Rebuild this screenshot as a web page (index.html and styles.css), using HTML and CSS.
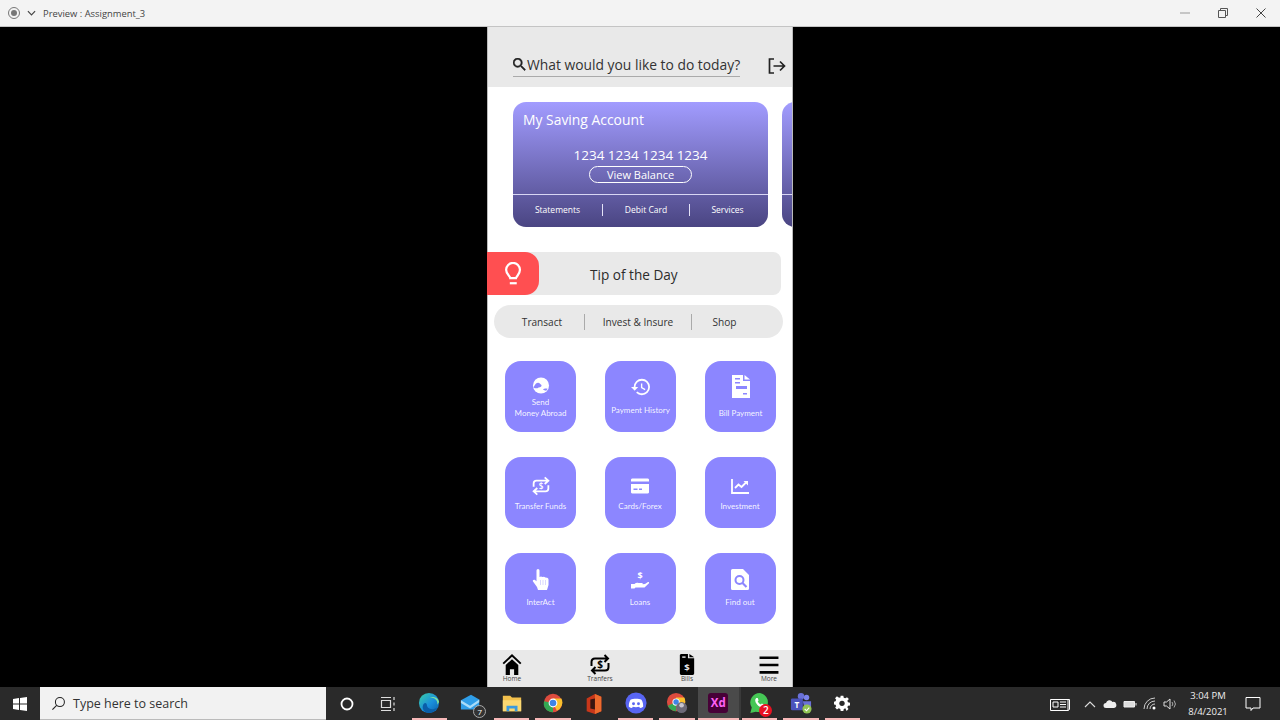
FILE: index.html
```html
<!DOCTYPE html>
<html lang="en">
<head>
  <meta charset="UTF-8">
  <meta name="viewport" content="width=device-width, initial-scale=1.0">
  <title>Preview : Assignment_3</title>
  <link rel="stylesheet" href="styles.css">
</head>
<body>
  <header class="titlebar">
    <svg class="rec" viewBox="0 0 14 14"><circle cx="7" cy="7" r="5.5" fill="none" stroke="#777"/><circle cx="7" cy="7" r="3" fill="#777"/></svg>
    <svg class="chev" viewBox="0 0 10 6"><path d="M1 1l4 4 4-4" fill="none" stroke="#444" stroke-width="1.3"/></svg>
    <span class="title">Preview : Assignment_3</span>
    <div class="winbtns">
      <svg viewBox="0 0 12 12"><path d="M1 6h10" stroke="#999" fill="none"/></svg>
      <svg viewBox="0 0 12 12"><path d="M1.5 3.5h7v7h-7zM3.5 3.5v-2h7v7h-2" stroke="#555" fill="none"/></svg>
      <svg viewBox="0 0 12 12"><path d="M1.5 1.5l9 9M10.5 1.5l-9 9" stroke="#444" fill="none"/></svg>
    </div>
  </header>

  <main class="stage">
    <div class="phone">
      <div class="top">
        <div class="search">
          <svg class="search-ico" viewBox="3 3 18 18"><path d="M15.5 14h-.79l-.28-.27A6.471 6.471 0 0 0 16 9.5 6.5 6.5 0 1 0 9.5 16c1.61 0 3.09-.59 4.23-1.57l.27.28v.79l5 4.99L20.49 19l-4.99-5zm-6 0C7.01 14 5 11.99 5 9.5S7.01 5 9.5 5 14 7.01 14 9.5 11.99 14 9.5 14z" fill="#222" stroke="#222" stroke-width=".6"/></svg>
          <span>What would you like to do today?</span>
        </div>
        <svg class="exit" viewBox="0 0 18 16"><path d="M6 1H1.5v14H6M5.5 8h11M12 3.5L16.5 8 12 12.5" fill="none" stroke="#222" stroke-width="1.7"/></svg>
      </div>

      <div class="cards">
        <section class="card">
          <h3>My Saving Account</h3>
          <div class="number">1234 1234 1234 1234</div>
          <div class="balance-row"><span class="balance">View Balance</span></div>
          <div class="links">
            <span class="l1">Statements</span><span class="l2">Debit Card</span><span class="l3">Services</span>
          </div>
        </section>
        <section class="card">
          <div class="links links-only"></div>
        </section>
      </div>

      <div class="tip">
        <div class="bulb">
          <svg viewBox="0 0 20 26"><path d="M6.5 17.500c0-2.500-4.500-4-4.500-9a7.500 7.500 0 0 1 15 0c0 5-3.800 6.500-4.300 9z" fill="none" stroke="#fff" stroke-width="2.400"/><path d="M6 23h7.500" stroke="#fff" stroke-width="2.400"/></svg>
        </div>
        <span>Tip of the Day</span>
      </div>

      <nav class="tabs">
        <span class="t1">Transact</span><span class="t2">Invest &amp; Insure</span><span class="t3">Shop</span>
      </nav>

      <div class="grid">
        <a class="tile r-send">
          <svg class="ico" viewBox="0 0 18 18"><circle cx="9" cy="9" r="8.500" fill="#fff"/><path d="M1 11c2-3.500 3-5 5-5 1.500 0 2 1.500 3.500 2.500.5 1.500-1 2.500-3 2.500-2 1.500-3.500 1-5.500 0zM11 13c1.500-1 3-1 5-.5l-1.500 2c-1.500 0-2.500-.5-3.500-1.500z" fill="#8c86ff"/></svg>
          <span>Send<br>Money Abroad</span>
        </a>
        <a class="tile r-hist">
          <svg class="ico" viewBox="1 3 21 18"><path d="M13 3a9 9 0 0 0-9 9H1l3.890 3.890.07.14L9 12H6c0-3.870 3.130-7 7-7s7 3.130 7 7-3.130 7-7 7c-1.930 0-3.680-.79-4.940-2.060l-1.420 1.420A8.954 8.954 0 0 0 13 21a9 9 0 0 0 0-18zm-1 5v5l4.280 2.540.72-1.210-3.500-2.080V8H12z" fill="#fff"/></svg>
          <span>Payment History</span>
        </a>
        <a class="tile r-bill">
          <svg class="ico" viewBox="0 0 18 23"><path d="M0 0h11v6h7v17H0z" fill="#fff"/><path d="M12.500 0L18 4.500h-5.500z" fill="#fff"/><path d="M3 3h5v1.500H3zM3 7h5v1.500H3zM4 11h11v3H4zM11 18h4v1.500h-4z" fill="#8c86ff"/></svg>
          <span>Bill Payment</span>
        </a>
        <a class="tile r-mid">
          <svg class="ico" viewBox="0 0 22 24"><path d="M2 13V9c0-2.500 1.500-3.500 3.500-3.500H19M15.500 1.500l4.500 4-4.500 4M20 11v4c0 2.500-1.500 3.500-3.500 3.500H3M6.500 14.500l-4.500 4 4.500 4" fill="none" stroke="#fff" stroke-width="2.200"/><text x="11" y="16" text-anchor="middle" class="dollar">$</text></svg>
          <span>Transfer Funds</span>
        </a>
        <a class="tile r-mid nudge">
          <svg class="ico" viewBox="0 0 18 20"><path d="M0 3.500A1.500 1.500 0 0 1 1.500 2.500h15A1.500 1.500 0 0 1 18 3.500V5.500H0zM0 8h18v8.500a1.500 1.500 0 0 1-1.500 1h-15A1.500 1.500 0 0 1 0 16.500z" fill="#fff"/><path d="M2.500 12.500h4v1.500h-4zM8 12.500h3v1.500H8z" fill="#8c86ff"/></svg>
          <span>Cards/Forex</span>
        </a>
        <a class="tile r-mid nudge">
          <svg class="ico" viewBox="0 0 18 20"><path d="M1 3v14h17" fill="none" stroke="#fff" stroke-width="1.800"/><path d="M4 12l3.500-3.500 3 2.500L15 6.500" fill="none" stroke="#fff" stroke-width="1.800"/><path d="M12.500 5H17v4.500z" fill="#fff"/></svg>
          <span>Investment</span>
        </a>
        <a class="tile r-low">
          <svg class="ico" viewBox="0 0 18 21"><path d="M4.500 1.500a1.500 1.500 0 0 1 3 0V8l1.500-.5 1.500.5 1.500-.3 1.500.7 1.500.3c1 .3 1.500 1 1.500 2V16l-1.500 5H6l-1-3-4-5.500c-.8-1.200.8-2.500 2-1.500l1.500 1.200z" fill="#fff"/><path d="M8.500 11v5M11 11v5M13.500 11v5" stroke="#c9c6ff" stroke-width=".7"/></svg>
          <span>InterAct</span>
        </a>
        <a class="tile r-low nudge">
          <svg class="ico" viewBox="0 0 18 20"><text x="9" y="9" text-anchor="middle" class="dollar-lg">$</text><path d="M0 14.500h3.500c1-1 2.500-1.500 4-1h3.500c1 0 1 1.500 0 1.500H8.500l5.500-.5 3-2c1-.3 1.500.5 1 1.200L13.500 18H4.500L3.500 19H0z" fill="#fff"/></svg>
          <span>Loans</span>
        </a>
        <a class="tile r-low nudge">
          <svg class="ico" viewBox="0 0 18 21"><path d="M1.500 0H12l6 6v13.500a1.500 1.500 0 0 1-1.500 1.500h-15A1.500 1.500 0 0 1 0 19.500v-18A1.500 1.500 0 0 1 1.500 0z" fill="#fff"/><circle cx="8.500" cy="11" r="4" fill="none" stroke="#8c86ff" stroke-width="2"/><path d="M11.500 14l4 4" stroke="#8c86ff" stroke-width="2.200"/></svg>
          <span>Find out</span>
        </a>
      </div>

      <footer class="bottom">
        <a class="nav-item">
          <svg viewBox="0 0 18 20"><path d="M9 0L0 8.500l1.300 1.300L9 2.600l7.700 7.200L18 8.500z" fill="#000"/><path d="M3 10.500L9 5l6 5.500V20h-4v-5.500H7V20H3z" fill="#000"/></svg>
          <span>Home</span>
        </a>
        <a class="nav-item">
          <svg viewBox="0 0 20 21"><path d="M1.500 12V8c0-2 1.200-3.500 3.500-3.500h13M14.500 1l3.500 3.500L14.500 8M18.500 9v4c0 2-1.200 3.500-3.500 3.500H2M5.500 13L2 16.500 5.500 20" fill="none" stroke="#000" stroke-width="2"/><text x="10" y="14" text-anchor="middle" class="dollar-nav">$</text></svg>
          <span>Tranfers</span>
        </a>
        <a class="nav-item">
          <svg viewBox="0 0 15 22"><path d="M1 0h7.500v4.500H15V20.500a1.500 1.500 0 0 1-1.500 1.500h-12A1.500 1.500 0 0 1 0 20.500V1zM10 0l5 3.500h-5z" fill="#000"/><path d="M2.500 2.500H6v1.500H2.500z" fill="#e9e9e9"/><text x="7.500" y="18" text-anchor="middle" class="dollar-bill">$</text></svg>
          <span>Bills</span>
        </a>
        <a class="nav-item">
          <svg viewBox="0 0 18 20"><path d="M0 3.500h18M0 10.500h18M0 17.500h18" stroke="#000" stroke-width="2.400"/></svg>
          <span>More</span>
        </a>
      </footer>
    </div>
  </main>

  <div class="taskbar">
    <div class="start">
      <svg viewBox="0 0 14 14"><path d="M0 2l6-.9V6.600H0zM7 1l7-1v6.600H7zM0 7.400h6v5.500L0 12zM7 7.400h7V14l-7-1z" fill="#fff"/></svg>
    </div>
    <div class="searchbox">
      <svg viewBox="0 0 16 16"><circle cx="9.500" cy="6.500" r="4.800" fill="none" stroke="#222" stroke-width="1.100"/><path d="M6 10L1.500 14.500" stroke="#222" stroke-width="1.200"/></svg>
      <span>Type here to search</span>
    </div>
    <div class="app"><svg viewBox="0 0 20 20"><circle cx="10" cy="10" r="5.500" fill="none" stroke="#fff" stroke-width="1.800"/></svg></div>
    <div class="app"><svg viewBox="0 0 20 20"><path d="M3 3.500h10M3 16.500h10M3.500 6.500h9v7h-9zM16 3v3M16 8.500v3M16 14v3" fill="none" stroke="#ddd" stroke-width="1.200"/></svg></div>
    <div class="app on">
      <svg class="big" viewBox="0 0 24 24"><defs><linearGradient id="edge" x1="0" y1="0" x2="1" y2="1"><stop offset="0" stop-color="#3ad0a6"/><stop offset=".55" stop-color="#1a8fdc"/><stop offset="1" stop-color="#0c5fa8"/></linearGradient></defs><circle cx="12" cy="12" r="11" fill="url(#edge)"/><path d="M9.500 13c0 4.500 5 8 11.500 3.800C19 21 15 23 12 23c-5 0-8-4.500-6.500-8.500C6.300 12 8 11 9.500 13z" fill="#0a5ea8"/><path d="M21 14c1-5-3-8-8-8 2-1 9-1 10 5z" fill="#7fe0a0"/></svg>
    </div>
    <div class="app">
      <svg class="big" viewBox="0 0 24 24"><path d="M1 8l11-6 9 5v11H1z" fill="#2f9ee8"/><path d="M1 8l10 6 10-7v3L11 17 1 11z" fill="#a8dcf8"/></svg>
      <span class="mail-badge">7</span>
    </div>
    <div class="app on">
      <svg class="big" viewBox="0 0 24 24"><path d="M2 4h8l2 2h10v15H2z" fill="#f2c04d"/><path d="M2 9h20v12H2z" fill="#fbd872"/><path d="M6 15h12v6h-3v-3H9v3H6z" fill="#3a9adf"/></svg>
    </div>
    <div class="app on"><svg class="big" viewBox="0 0 24 24"><circle cx="12" cy="12" r="10" fill="#dd4b3e"/><path d="M12 12L3 17a10 10 0 0 0 9 5z" fill="#34a853"/><path d="M3 17a10 10 0 0 1-.8-7L12 12l-3.500 9z" fill="#34a853"/><path d="M12 7h9.200a10 10 0 0 1-5 13.500L12 12z" fill="#fbc02d"/><circle cx="12" cy="12" r="4.800" fill="#fff"/><circle cx="12" cy="12" r="3.600" fill="#3f84e6"/></svg></div>
    <div class="app"><svg class="big" viewBox="0 0 24 24"><path d="M13 1l7 3v16l-7 3-9-3V6z" fill="#c8371a"/><path d="M13 1l7 3v16l-7 3z" fill="#ee6b2d"/><path d="M8 7l5-1v12l-5-1z" fill="#3a1510"/></svg></div>
    <div class="app on"><svg class="big" viewBox="0 0 24 24"><circle cx="12" cy="12" r="11.500" fill="#5865f2"/><path d="M6 8.500C9 7 15 7 18 8.500c1.500 2.500 2 5 1.800 7.500-1.200.9-2.500 1.300-3.500 1.500l-.8-1.300c-2.200.6-4.800.6-7 0l-.8 1.300c-1-.2-2.300-.6-3.500-1.500C4 13.500 4.500 11 6 8.500z" fill="#fff"/><circle cx="9.300" cy="12.800" r="1.600" fill="#5865f2"/><circle cx="14.700" cy="12.800" r="1.600" fill="#5865f2"/></svg></div>
    <div class="app on"><svg class="big" viewBox="0 0 24 24"><circle cx="11" cy="11" r="10" fill="#dd4b3e"/><path d="M11 11L2 15a10 10 0 0 0 9 6z" fill="#34a853"/><path d="M11 6h9a10 10 0 0 1-4 13l-5-8z" fill="#fbc02d"/><circle cx="11" cy="11" r="4" fill="#fff"/><circle cx="11" cy="11" r="3" fill="#3f84e6"/><circle cx="17" cy="17" r="6" fill="#6d6a78"/><circle cx="17" cy="14.500" r="2.500" fill="#c9c6cf"/></svg></div>
    <div class="app active"><div class="xd">Xd</div></div>
    <div class="app on">
      <svg class="big" viewBox="0 0 24 24"><path d="M12 1a10.500 10.500 0 0 0-9 16L1.500 23l6-1.500A10.500 10.500 0 1 0 12 1z" fill="#45c655"/><path d="M8 6.500c-2 1.500-1.500 4.500 1 7.500 3 3 5.500 3.500 7 2 .8-1 .8-2 .3-2.300l-2.300-1.200-1 1.200c-1.500-.5-3-2-3.500-3.500l1-1L9.500 6.500z" fill="#fff"/></svg>
      <span class="wa-badge">2</span>
    </div>
    <div class="app on"><svg class="big" viewBox="0 0 24 24"><circle cx="18" cy="6" r="3" fill="#7b83eb"/><circle cx="12" cy="4.500" r="3.500" fill="#6a71d8"/><path d="M14 10h9v6a4 4 0 0 1-7 2z" fill="#6a71d8"/><rect x="1" y="7" width="13" height="13" rx="1.500" fill="#4b53bc"/><text x="7.500" y="17" text-anchor="middle" class="teams-t">T</text><circle cx="18.500" cy="18.500" r="5" fill="#92c353"/><path d="M16 18.500l2 2 3-3.500" fill="none" stroke="#fff" stroke-width="1.200"/></svg></div>
    <div class="app on"><svg class="gear" viewBox="0 0 24 24"><path d="M10 1h4l.6 3 2.300 1 2.600-1.700 2.800 2.800L20 8.700l1 2.300 3 .6v4l-3 .6-1 2.300 1.700 2.600-2.800 2.800L17 20l-2.300 1-.7 3h-4l-.6-3-2.300-1-2.600 1.700-2.800-2.800L3.300 17l-1-2.300-3-.6v-4l3-.6 1-2.300L1.600 4.800l2.800-2.800L7 3.700 9.400 4z" fill="#fff"/><circle cx="12" cy="12.500" r="4" fill="#2a2a2a"/></svg></div>

    <div class="tray">
      <div class="news"><svg viewBox="0 0 20 14"><path d="M.5 2.500h17.500v11H.5zM18 2.500h1.500v10l-1.500 1" fill="none" stroke="#fff"/><path d="M3 5h5v5H3z" fill="none" stroke="#fff"/><path d="M10 5h6M10 7.500h6M10 10h6" stroke="#fff"/></svg></div>
      <div class="t-ico"><svg viewBox="0 0 14 14"><path d="M2 10l5-5 5 5" fill="none" stroke="#ddd" stroke-width="1.100"/></svg></div>
      <div class="t-ico"><svg viewBox="0 0 14 14"><path d="M3 11a2.500 2.500 0 0 1 0-5 3.500 3.500 0 0 1 6.500-1A3 3 0 0 1 11 11z" fill="#eee"/></svg></div>
      <div class="t-ico"><svg viewBox="0 0 14 14"><path d="M1 4.500h10.500v5.500H1z" fill="#ddd" stroke="#eee"/><path d="M12.500 6h1v2.500h-1z" fill="#eee"/></svg></div>
      <div class="t-ico"><svg viewBox="0 0 14 14"><path d="M1 12a11 11 0 0 1 11-11M4 12a8 8 0 0 1 8-8M7 12a5 5 0 0 1 5-5" fill="none" stroke="#ccc"/><circle cx="11" cy="11" r="1.500" fill="#fff"/></svg></div>
      <div class="t-ico"><svg viewBox="0 0 14 14"><path d="M1 5h2.500L7 2v10L3.500 9H1z" fill="none" stroke="#ddd"/><path d="M9 5a3 3 0 0 1 0 4M11 3.500a5.500 5.500 0 0 1 0 7" fill="none" stroke="#aaa"/></svg></div>
      <div class="clock"><span>3:04 PM</span><span>8/4/2021</span></div>
      <div class="notif"><svg viewBox="0 0 16 16"><path d="M1 1.500h14v10.500H8l-2 2.500V12H1z" fill="none" stroke="#fff"/></svg></div>
    </div>
  </div>
</body>
</html>
```

FILE: styles.css
```css
* {
  box-sizing: border-box;
}

html, body {
  height: 100%;
}

body {
  margin: 0;
  height: 720px;
  overflow: hidden;
  display: flex;
  flex-direction: column;
  font-family: "Open Sans", sans-serif;
  background: #000;
}

/* window chrome */
.titlebar {
  height: 27px;
  flex: none;
  display: flex;
  align-items: center;
  background: #f3f3f3;
  border-bottom: 1px solid #c4c4c4;
  padding-left: 7px;
  color: #444;
}

.rec {
  width: 14px;
  height: 14px;
}

.chev {
  width: 9px;
  height: 6px;
  margin-left: 6px;
}

.title {
  margin-left: 7px;
  font-size: 9.4px;
}

.winbtns {
  margin-left: auto;
  display: flex;
  gap: 26px;
  padding-right: 13px;
}

.winbtns svg {
  width: 12px;
  height: 12px;
}

.stage {
  flex: 1;
  display: flex;
  justify-content: center;
  background: #000;
  min-height: 0;
}

/* phone prototype */
.phone {
  width: 306px;
  background: #fff;
  border-left: 1px solid #bbb;
  border-right: 1px solid #bbb;
  display: flex;
  flex-direction: column;
}

.top {
  height: 60px;
  flex: none;
  background: #e9e9e9;
  display: flex;
  align-items: flex-end;
  padding: 0 6px 10px 25px;
}

.search {
  width: 227px;
  height: 25px;
  display: flex;
  align-items: center;
  border-bottom: 1px solid #aaa;
  font-size: 13.85px;
  color: #333;
  white-space: nowrap;
}

.search-ico {
  width: 13px;
  height: 13px;
  margin: 1px 1px 0 0;
  flex: none;
}

.exit {
  width: 18px;
  height: 16px;
  margin-left: auto;
  margin-bottom: 3px;
}

.cards {
  display: flex;
  gap: 14px;
  padding-left: 25px;
  margin-top: 15px;
  flex: none;
  overflow: hidden;
}

.card {
  width: 255px;
  height: 125px;
  flex: none;
  border-radius: 13px;
  background: linear-gradient(#a29cff, #4a4582);
  color: #fff;
  display: flex;
  flex-direction: column;
}

.card h3 {
  margin: 8px 0 0 10px;
  font-size: 13.9px;
  font-weight: 400;
  line-height: 19px;
}

.number {
  margin-top: 17px;
  text-align: center;
  font-size: 13.5px;
  line-height: 18px;
}

.balance-row {
  display: flex;
  justify-content: center;
  margin-top: 2px;
}

.balance {
  width: 103px;
  height: 17px;
  border: 1px solid #fff;
  border-radius: 9px;
  text-align: center;
  font-size: 11px;
  line-height: 15px;
}

.links {
  margin-top: 11px;
  height: 33px;
  padding-bottom: 3px;
  border-top: 1px solid #d8d6f4;
  display: grid;
  grid-template-columns: 90px 87px 78px;
  align-items: center;
  font-size: 8.5px;
  font-weight: 500;
  text-align: center;
}

.links-only {
  margin-top: 92px;
}

.links span {
  line-height: 12px;
}

.l1, .l2 {
  border-right: 1px solid #e4e3f8;
}

.l3 {
  padding-right: 3px;
}

.tip {
  margin: 25px 0 0 -1px;
  width: 294px;
  height: 43px;
  flex: none;
  display: flex;
  align-items: center;
  background: #e9e9e9;
  border-radius: 0 8px 8px 0;
  font-size: 13.6px;
  color: #2c2c2c;
}

.bulb {
  width: 52px;
  height: 43px;
  flex: none;
  background: #ff4f51;
  border-radius: 0 14px 14px 0;
  display: flex;
  align-items: center;
  justify-content: center;
}

.bulb svg {
  width: 19px;
  height: 24px;
}

.tip > span {
  margin: 2px 0 0 51px;
}

.tabs {
  margin: 10px 0 0 6px;
  width: 289px;
  height: 33px;
  flex: none;
  border-radius: 17px;
  background: #e9e9e9;
  display: grid;
  grid-template-columns: 91px 107px 91px;
  align-items: center;
  font-size: 10.1px;
  color: #333;
  text-align: center;
}

.tabs span {
  line-height: 16px;
}

.t1, .t2 {
  border-right: 1.5px solid #aaa;
}

.t1 {
  padding-left: 6px;
}

.t3 {
  padding-right: 26px;
}

.grid {
  margin: 23px 0 0 17px;
  display: grid;
  grid-template-columns: repeat(3, 71px);
  grid-auto-rows: 71px;
  column-gap: 29px;
  row-gap: 25px;
  flex: none;
}

.tile {
  border-radius: 16px;
  background: #8c86ff;
  color: rgba(255, 255, 255, .92);
  display: flex;
  flex-direction: column;
  align-items: center;
  font-family: Lato, sans-serif;
  font-size: 8px;
  line-height: 11px;
  text-align: center;
}

.nudge {
  margin: 0 .5px 0 -.5px;
}

.ico {
  width: 18px;
  height: 20px;
  flex: none;
}

.r-send {
  padding-top: 16px;
}

.r-send .ico {
  height: 17px;
}

.r-send span {
  margin-top: 3px;
}

.r-hist {
  padding-top: 17px;
}

.r-hist .ico {
  width: 19px;
  height: 18px;
}

.r-hist span {
  margin-top: 9px;
}

.r-bill {
  padding-top: 14px;
}

.r-bill .ico {
  height: 23px;
}

.r-bill span {
  margin-top: 10px;
}

.r-mid {
  padding-top: 19px;
}

.r-mid span {
  margin-top: 5px;
}

.r-low {
  padding-top: 16px;
}

.r-low .ico {
  height: 21px;
}

.r-low span {
  margin-top: 7px;
}

.dollar {
  font: 600 10px "Open Sans", sans-serif;
  fill: #fff;
}

.dollar-lg {
  font: 700 9px "Open Sans", sans-serif;
  fill: #fff;
}

.dollar-nav {
  font: 700 10px "Open Sans", sans-serif;
  fill: #000;
}

.dollar-bill {
  font: 700 10px "Open Sans", sans-serif;
  fill: #e9e9e9;
}

.teams-t {
  font: 700 9px "Open Sans", sans-serif;
  fill: #fff;
}

.bottom {
  margin-top: auto;
  height: 37px;
  flex: none;
  background: #e9e9e9;
  display: grid;
  grid-template-columns: 88px 87px 82px 40px;
  padding-left: 4px;
}

.nav-item {
  width: 40px;
  display: flex;
  flex-direction: column;
  align-items: center;
  padding-top: 4px;
  font-size: 6.5px;
  line-height: 8px;
  color: #444;
}

.nav-item svg {
  height: 21px;
  width: 20px;
  flex: none;
}

/* windows taskbar */
.taskbar {
  height: 33px;
  flex: none;
  display: flex;
  align-items: stretch;
  background: #2a2a2a;
  color: #fff;
}

.start {
  width: 40px;
  display: flex;
  align-items: center;
  justify-content: center;
}

.start svg {
  width: 14px;
  height: 14px;
}

.searchbox {
  width: 286px;
  background: #f2f2f2;
  color: #333;
  display: flex;
  align-items: center;
  padding-left: 11px;
  font-size: 12.5px;
  border-bottom: 1px solid #bbb;
}

.searchbox svg {
  width: 15px;
  height: 15px;
  margin-right: 7px;
}

.app {
  position: relative;
  width: 41.3px;
  flex: none;
  display: flex;
  align-items: center;
  justify-content: center;
}

.app svg {
  width: 20px;
  height: 20px;
}

.app svg.big {
  width: 22px;
  height: 22px;
}

.app svg.gear {
  width: 16px;
  height: 16px;
}

.app.on {
  border-bottom: 2px solid #f6b8b8;
  margin: 0 3px;
  width: 35.3px;
}

.app.active {
  background: #4a4a4a;
  border-bottom: 2px solid #f6b8b8;
  box-shadow: 2px 0 0 #3a3a3a;
}

.xd {
  width: 20px;
  height: 20px;
  border-radius: 3px;
  background: #470137;
  color: #ff61f6;
  font-size: 11.5px;
  font-weight: 700;
  line-height: 20px;
  text-align: center;
}

.mail-badge {
  position: absolute;
  right: 5px;
  bottom: 2px;
  width: 13px;
  height: 13px;
  border-radius: 50%;
  background: #333;
  border: 1px solid #aaa;
  font-size: 8px;
  line-height: 11px;
  text-align: center;
}

.wa-badge {
  position: absolute;
  right: 5px;
  bottom: 1px;
  width: 13px;
  height: 13px;
  border-radius: 50%;
  background: #e81123;
  font-size: 10px;
  font-weight: 600;
  line-height: 13px;
  text-align: center;
}

.tray {
  margin-left: auto;
  display: flex;
  align-items: center;
  padding-right: 10px;
}

.news {
  width: 36px;
  padding-right: 4px;
  display: flex;
  justify-content: center;
}

.news svg {
  width: 20px;
  height: 14px;
}

.t-ico {
  width: 20px;
  display: flex;
  justify-content: center;
}

.t-ico svg {
  width: 14px;
  height: 14px;
}

.clock {
  width: 56px;
  display: flex;
  flex-direction: column;
  align-items: center;
  font-size: 9.5px;
  line-height: 16px;
  color: #eee;
}

.notif {
  width: 34px;
  display: flex;
  justify-content: center;
}

.notif svg {
  width: 16px;
  height: 16px;
}
```
